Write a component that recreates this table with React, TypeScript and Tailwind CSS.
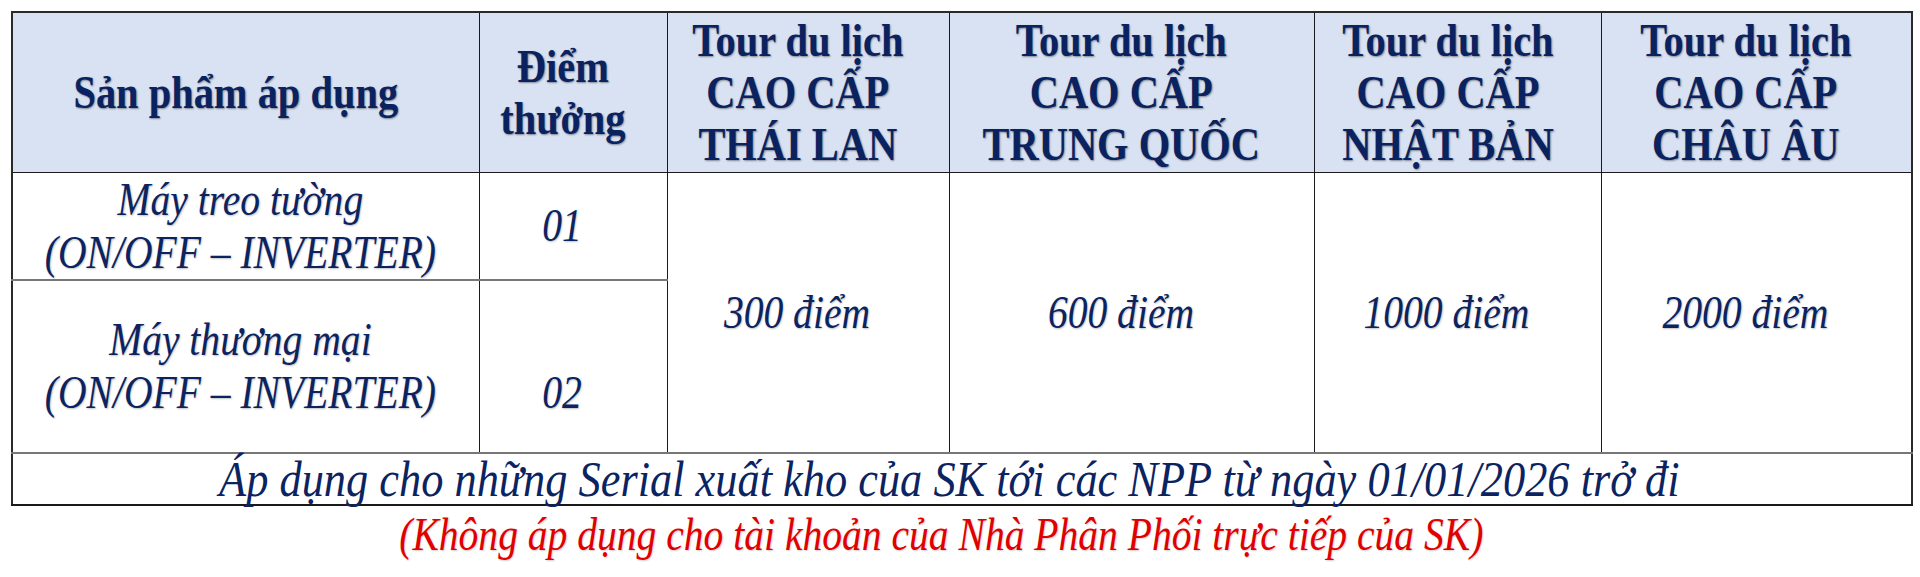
import React from "react";

function S({ children, className = "" }: { children: React.ReactNode; className?: string }) {
  return <span className={`inline-block scale-x-[0.86] origin-center ${className}`}>{children}</span>;
}

export default function App() {
  const th =
    "border border-[#1a1a1a] bg-[#d9e2f3] text-center align-middle font-bold text-[47px] leading-[52px] text-[#0a2360] [text-shadow:1px_1px_2px_rgba(0,0,0,0.4)] py-0 pl-0 pr-[20px] whitespace-nowrap";
  const td =
    "border border-[#1a1a1a] text-center align-middle italic text-[46px] leading-[53px] text-[#0b2461] [text-shadow:1px_1px_2px_rgba(0,0,0,0.25)] py-0 pl-0 pr-[22px] whitespace-nowrap";
  return (
    <div
      className="w-[1920px] h-[577px] bg-white pl-[11px] pt-[11px] overflow-hidden"
      style={{ fontFamily: '"Liberation Serif", "Times New Roman", serif' }}
    >
      <table className="table-fixed border-collapse w-[1900px] border-2 border-[#2a2a2a]">
        <colgroup>
          <col className="w-[467px]" />
          <col className="w-[188px]" />
          <col className="w-[282px]" />
          <col className="w-[365px]" />
          <col className="w-[287px]" />
          <col className="w-[311px]" />
        </colgroup>
        <tbody>
          <tr className="h-[160px]">
            <th className={th}>
              <S>Sản phẩm áp dụng</S>
            </th>
            <th className={th}>
              <S>
                Điểm
                <br />
                thưởng
              </S>
            </th>
            <th className={th}>
              <S>
                Tour du lịch
                <br />
                CAO CẤP
                <br />
                THÁI LAN
              </S>
            </th>
            <th className={th}>
              <S>
                Tour du lịch
                <br />
                CAO CẤP
                <br />
                TRUNG QUỐC
              </S>
            </th>
            <th className={th}>
              <S>
                Tour du lịch
                <br />
                CAO CẤP
                <br />
                NHẬT BẢN
              </S>
            </th>
            <th className={th}>
              <S>
                Tour du lịch
                <br />
                CAO CẤP
                <br />
                CHÂU ÂU
              </S>
            </th>
          </tr>
          <tr className="h-[106px]">
            <td className={`${td} border-b-2 border-b-[#777]`}>
              <S>
                Máy treo tường
                <br />
                (ON/OFF – INVERTER)
              </S>
            </td>
            <td className={`${td} border-b-2 border-b-[#777]`}>
              <S>01</S>
            </td>
            <td rowSpan={2} className={td}>
              <S>300 điểm</S>
            </td>
            <td rowSpan={2} className={td}>
              <S>600 điểm</S>
            </td>
            <td rowSpan={2} className={td}>
              <S>1000 điểm</S>
            </td>
            <td rowSpan={2} className={td}>
              <S>2000 điểm</S>
            </td>
          </tr>
          <tr className="h-[173px]">
            <td className={td}>
              <S>
                Máy thương mại
                <br />
                (ON/OFF – INVERTER)
              </S>
            </td>
            <td className={td}>
              <S>
                <span className="block h-[53px]"></span>
                02
              </S>
            </td>
          </tr>
          <tr className="h-[52px]">
            <td
              colSpan={6}
              className="border-t-2 border-t-[#777] border-b-2 border-b-[#1a1a1a] text-center align-middle italic text-[51px] leading-[50px] text-[#0b2461] py-0 pl-0 pr-[26px] whitespace-nowrap"
            >
              <S className="scale-x-[0.87]">
                Áp dụng cho những Serial xuất kho của SK tới các NPP từ ngày 01/01/2026 trở đi
              </S>
            </td>
          </tr>
        </tbody>
      </table>
      <div className="w-[1900px] text-center italic text-[46px] leading-[58px] text-[#e00000] pr-[40px] whitespace-nowrap [text-shadow:1px_1px_2px_rgba(0,0,0,0.2)]">
        <S>(Không áp dụng cho tài khoản của Nhà Phân Phối trực tiếp của SK)</S>
      </div>
    </div>
  );
}
